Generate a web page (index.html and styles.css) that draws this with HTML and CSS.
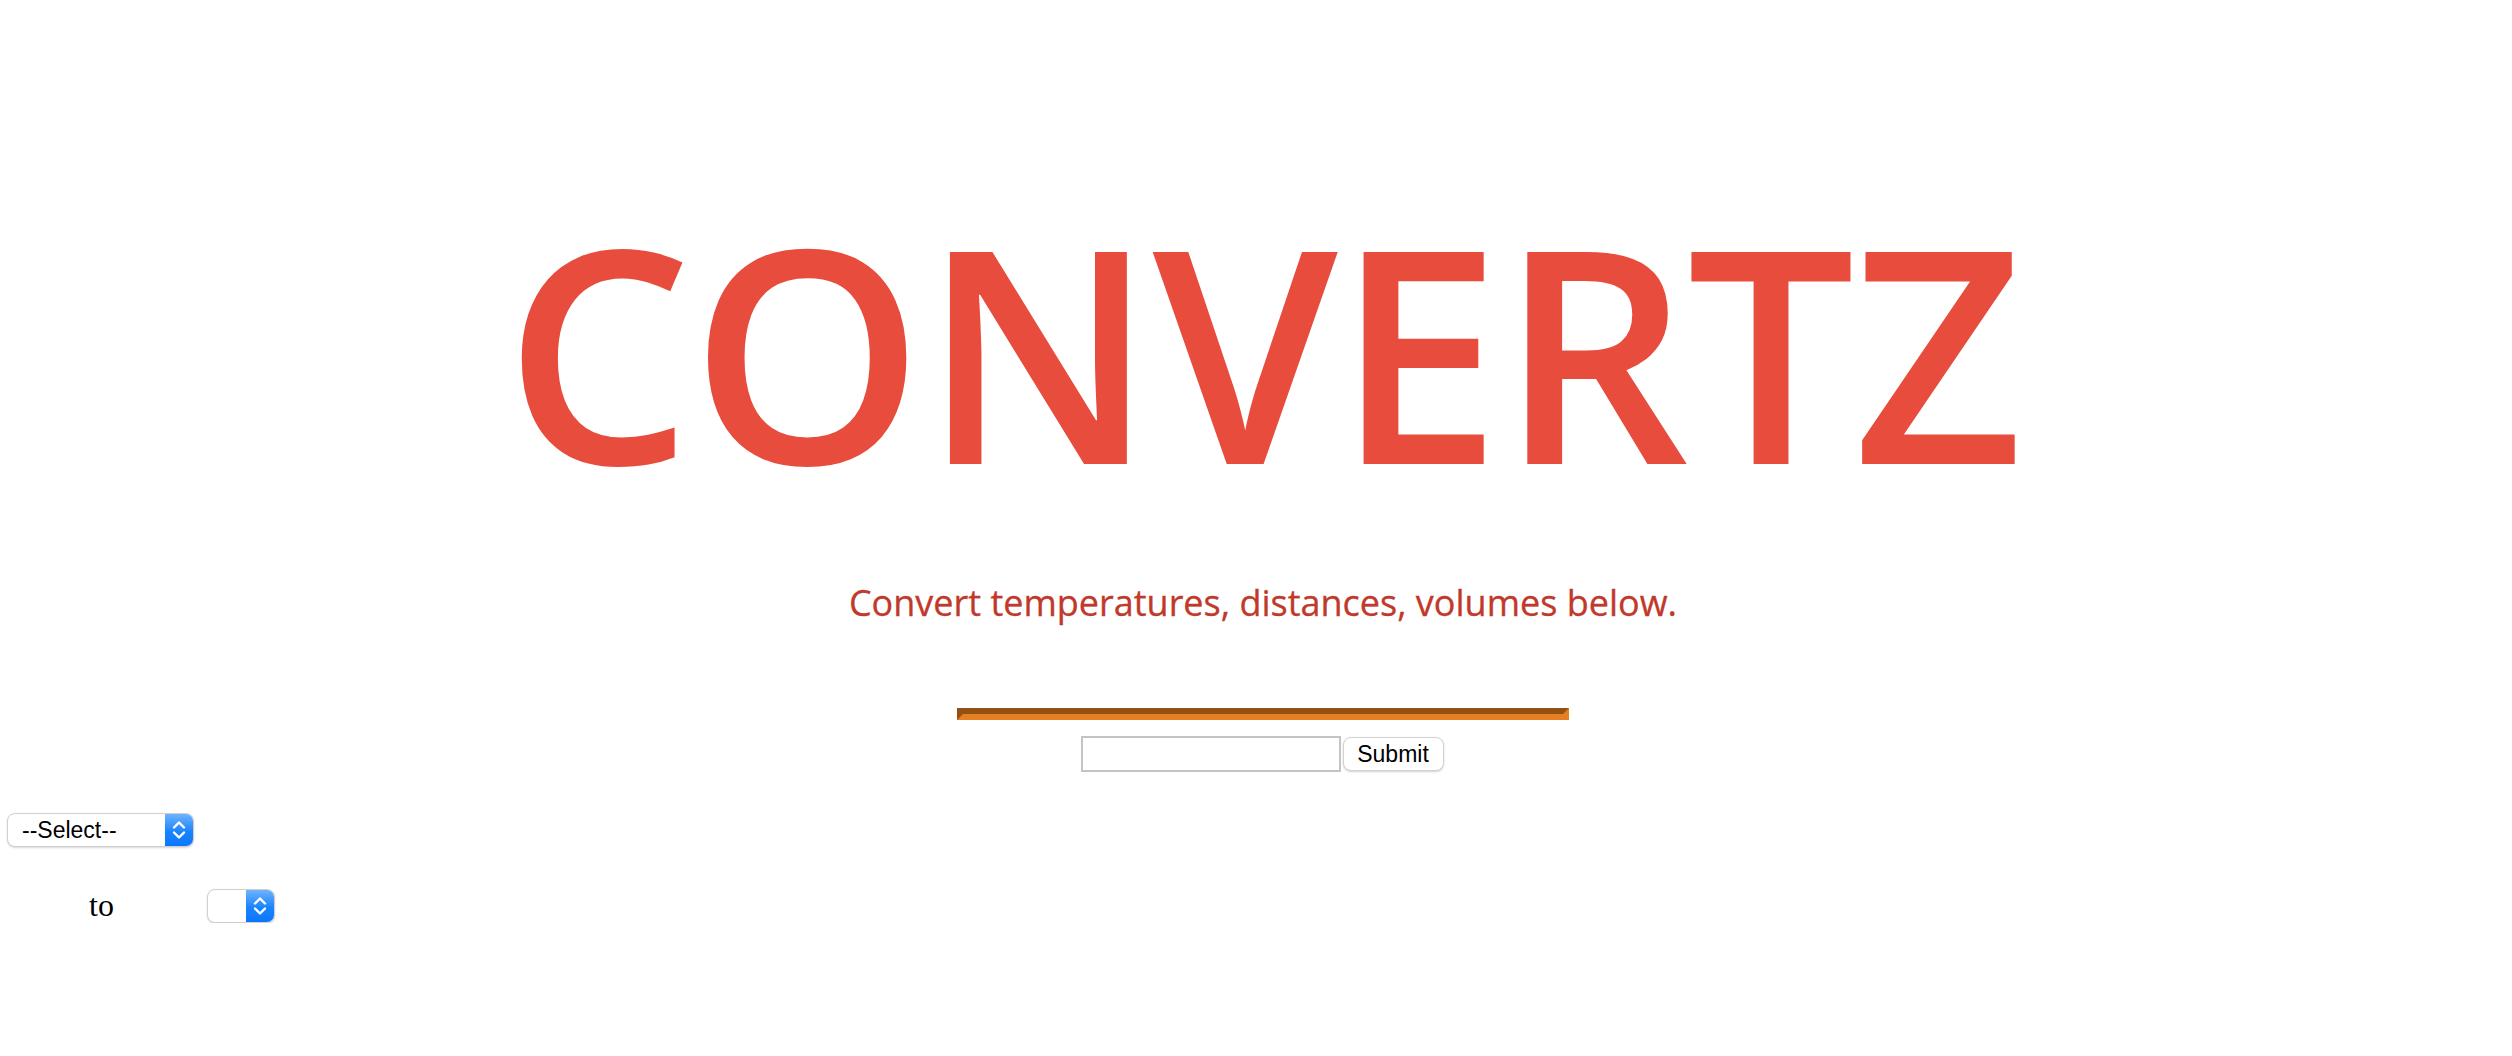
FILE: index.html
```html
<!DOCTYPE html>
<html lang="en">
<head>
<meta charset="utf-8">
<title>Convertz</title>
<link rel="stylesheet" href="styles.css">
</head>
<body>
<main class="page">
  <h1 class="title">CONVERTZ</h1>
  <p class="subtitle">Convert temperatures, distances, volumes below.</p>
  <hr class="divider">
  <form class="entry">
    <input class="entry-input" type="text">
    <button class="entry-button" type="button">Submit</button>
  </form>
</main>
<div class="unit-row first">
  <label class="select-box wide">
    <select class="select-native"><option>--Select--</option></select>
    <span class="select-arrow"><svg width="16" height="24" viewBox="0 0 16 24"><path d="M3 9.5 L8 4.5 L13 9.5 M3 14.5 L8 19.5 L13 14.5" fill="none" stroke="#fff" stroke-width="2.4" stroke-linecap="round" stroke-linejoin="round"/></svg></span>
  </label>
</div>
<div class="unit-row second">
  <span class="to-label">to</span>
  <label class="select-box narrow">
    <select class="select-native"><option></option></select>
    <span class="select-arrow"><svg width="16" height="24" viewBox="0 0 16 24"><path d="M3 9.5 L8 4.5 L13 9.5 M3 14.5 L8 19.5 L13 14.5" fill="none" stroke="#fff" stroke-width="2.4" stroke-linecap="round" stroke-linejoin="round"/></svg></span>
  </label>
</div>
</body>
</html>
```
FILE: styles.css
```css
html, body {
  margin: 0;
  padding: 0;
  background: #ffffff;
}

.page {
  display: flex;
  flex-direction: column;
  align-items: center;
  padding-left: 14px;
}

.title {
  margin: 201px 0 0 0;
  font-family: "Open Sans", sans-serif;
  font-weight: 600;
  font-size: 297px;
  line-height: 297px;
  color: #e74c3c;
  letter-spacing: -2px;
}

.subtitle {
  margin: 87px 0 0 0;
  font-family: "Open Sans", sans-serif;
  font-size: 36px;
  line-height: 36px;
  color: #c0392b;
  -webkit-text-stroke: 0.3px #c0392b;
}

.divider {
  box-sizing: border-box;
  width: 612px;
  height: 12px;
  margin: 87px 0 0 0;
  border: 6px inset #e67e22;
}

.entry {
  display: flex;
  align-items: center;
  gap: 2px;
  margin: 16px 0 0 0;
  padding-right: 2px;
}

.entry-input {
  box-sizing: border-box;
  width: 260px;
  height: 36px;
  margin: 0;
  border: 2px solid #c4c4c4;
  border-radius: 0;
  background: #fff;
}

.entry-button {
  box-sizing: border-box;
  width: 101px;
  height: 34px;
  margin: 0;
  padding: 0;
  border: 1px solid #d2d2d2;
  border-radius: 8px;
  background: #fff;
  box-shadow: 0 1px 2px rgba(0, 0, 0, 0.18);
  font-family: "Liberation Sans", Arial, sans-serif;
  font-size: 23px;
  color: #000;
}

.unit-row {
  display: flex;
  align-items: center;
}

.unit-row.first {
  margin-top: 41px;
  padding-left: 7px;
}

.unit-row.second {
  margin-top: 41px;
  padding-left: 89px;
}

.to-label {
  font-family: "Liberation Serif", "Times New Roman", serif;
  font-size: 32px;
  line-height: 35px;
  color: #000;
  margin-right: 93px;
}

.select-box {
  box-sizing: border-box;
  display: flex;
  height: 34px;
  border: 1px solid #cfcfcf;
  border-radius: 8px;
  background: #fff;
  box-shadow: 0 1px 2px rgba(0, 0, 0, 0.15);
  overflow: hidden;
}

.select-box.wide {
  width: 187px;
}

.select-box.narrow {
  width: 68px;
}

.select-native {
  flex: 1;
  min-width: 0;
  appearance: none;
  -webkit-appearance: none;
  border: none;
  outline: none;
  background: transparent;
  margin: 0;
  padding: 0 0 0 14px;
  font-family: "Liberation Sans", Arial, sans-serif;
  font-size: 23px;
  color: #000;
}

.select-arrow {
  width: 28px;
  display: flex;
  align-items: center;
  justify-content: center;
  background: linear-gradient(#6db3fd, #1a84ff 55%, #0a77fb);
}
```
